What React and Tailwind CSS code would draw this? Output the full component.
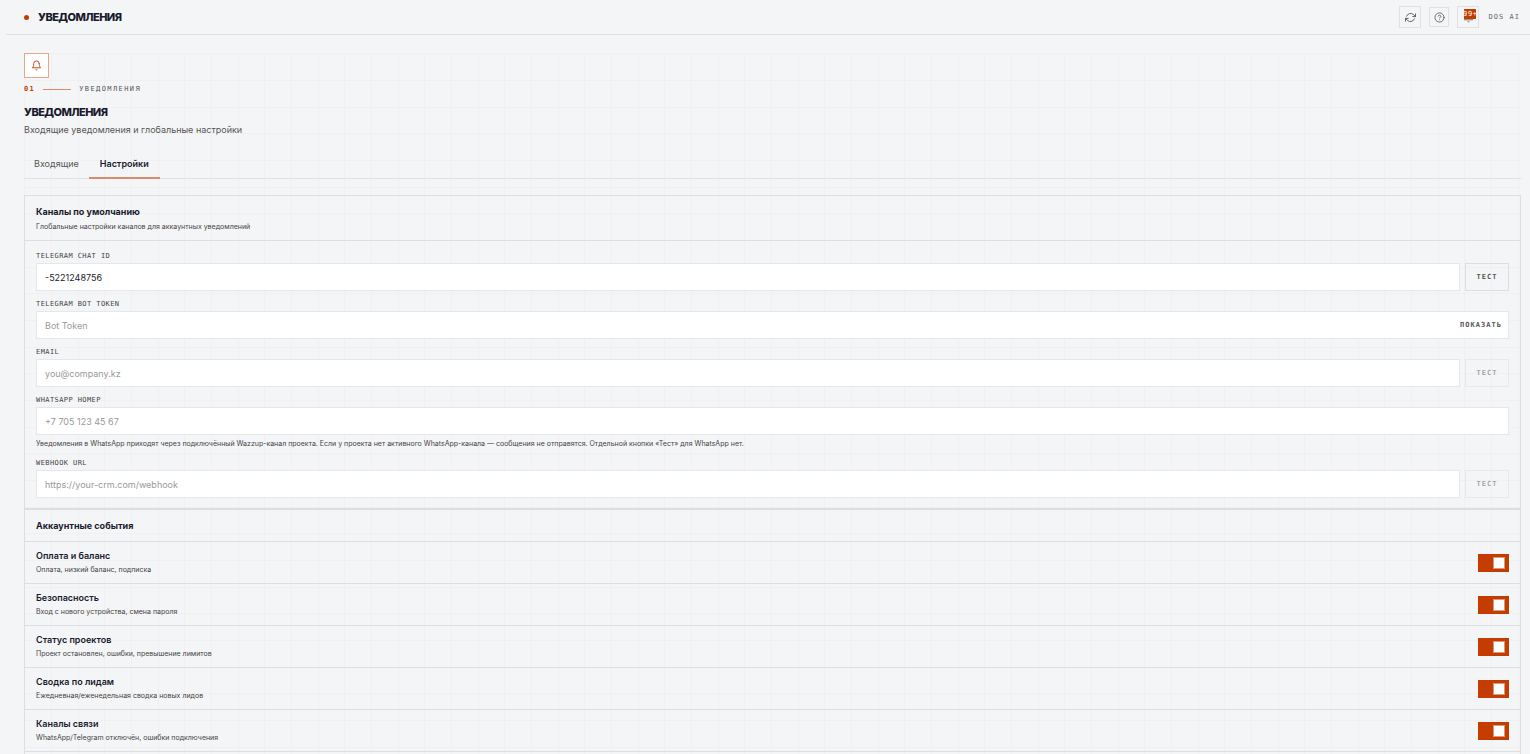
import { useState } from 'react';
import { FiBell, FiHelpCircle, FiRefreshCw } from 'react-icons/fi';

const EVENTS = [
  { id: 'billing', title: 'Оплата и баланс', note: 'Оплата, низкий баланс, подписка' },
  { id: 'security', title: 'Безопасность', note: 'Вход с нового устройства, смена пароля' },
  { id: 'projects', title: 'Статус проектов', note: 'Проект остановлен, ошибки, превышение лимитов' },
  { id: 'leads', title: 'Сводка по лидам', note: 'Ежедневная/еженедельная сводка новых лидов' },
  { id: 'channels', title: 'Каналы связи', note: 'WhatsApp/Telegram отключён, ошибки подключения' },
];

const MONO = "font-['DejaVu_Sans_Mono','Liberation_Mono',monospace]";

function Header() {
  return (
    <header className="flex h-[35px] items-center justify-between border-b border-[#dfe1e4] pr-2.5 pl-[18px]">
      <div className="flex items-center gap-[9px]">
        <span className="size-[5px] rounded-full bg-[#c43c00]" />
        <span className="text-[11px] font-extrabold tracking-tighter">УВЕДОМЛЕНИЯ</span>
      </div>
      <div className="flex items-center gap-[9px]">
        <div className="flex items-center gap-2">
          <button aria-label="Обновить" className="flex size-[22px] items-center justify-center border border-[#dfe1e4] text-[#555]">
            <FiRefreshCw size={11} />
          </button>
          <button aria-label="Справка" className="flex size-5 items-center justify-center border border-[#dfe1e4] text-[#666]">
            <FiHelpCircle size={11} />
          </button>
          <button aria-label="Уведомления" className="relative flex size-[22px] items-center justify-center border border-[#dfe1e4] text-[#666]">
            <FiBell size={11} />
            <span className={`${MONO} absolute top-[2px] right-[2px] flex h-2.5 w-3 items-center justify-center overflow-hidden bg-[#c43c00] text-[7px] tracking-widest text-white`}>
              99+
            </span>
          </button>
        </div>
        <span className={`${MONO} text-[7px] tracking-[0.15em] text-[#666]`}>DOS AI</span>
      </div>
    </header>
  );
}

function Field({ id, label, type = 'text', value, placeholder, test, reveal, hint }) {
  const [text, setText] = useState(value ?? '');
  const [shown, setShown] = useState(false);
  return (
    <div>
      <label htmlFor={id} className={`${MONO} block h-4 text-[7px] leading-[18px] tracking-[0.06em] text-[#444]`}>
        {label}
      </label>
      <div className="flex gap-[5px]">
        <div className="relative flex-1">
          <input
            id={id}
            type={reveal && !shown ? 'password' : type}
            value={text}
            onChange={(e) => setText(e.target.value)}
            placeholder={placeholder}
            className="block h-7 w-full border border-[#e5e7ea] bg-white px-2 text-[9px] text-[#1a1a2e] outline-none placeholder:text-[#999]"
          />
          {reveal && (
            <button
              onClick={() => setShown(!shown)}
              className={`${MONO} absolute inset-y-0 right-[7px] text-[7px] leading-[14px] font-bold tracking-[0.15em] text-[#555]`}
            >
              ПОКАЗАТЬ
            </button>
          )}
        </div>
        {test && (
          <button
            disabled={!text}
            className={`${MONO} h-7 w-11 border border-[#dcdee1] text-[7px] leading-[14px] font-bold tracking-[0.15em] text-[#555] disabled:opacity-50`}
          >
            ТЕСТ
          </button>
        )}
      </div>
      {hint && <p className="pt-[3px] text-[7px] leading-3 text-[#444]">{hint}</p>}
    </div>
  );
}

function EventRow({ id, title, note }) {
  const [on, setOn] = useState(true);
  return (
    <div className="flex h-[42px] items-center justify-between border-b border-[#dcdee1] px-[11px]">
      <label htmlFor={id}>
        <span className="block text-[9px] leading-[14px] font-semibold">{title}</span>
        <span className="block text-[7px] leading-[14px] text-[#444]">{note}</span>
      </label>
      <button
        id={id}
        role="switch"
        aria-checked={on}
        onClick={() => setOn(!on)}
        className="flex h-[18px] w-[31px] items-center justify-end bg-[#aaa] px-1 aria-checked:bg-[#c43c00]"
      >
        <span className="size-3 border border-[#d99878] bg-white" />
      </button>
    </div>
  );
}

export default function App() {
  return (
    <div className="flex min-h-screen flex-col bg-[#f4f5f7] pl-1.5 font-['Inter',sans-serif] text-[#1a1a2e]">
      <Header />
      <main className="mt-[18px] mr-[9px] ml-[18px] flex flex-1 flex-col bg-[linear-gradient(#f2eff0_1px,transparent_1px,transparent_27px,#f2eff0_27px,#f2eff0_28px,transparent_28px,transparent_54px,#f2eff0_54px,#f2eff0_55px,transparent_55px),linear-gradient(90deg,#f2eff0_1px,transparent_1px,transparent_27px,#f2eff0_27px,#f2eff0_28px,transparent_28px,transparent_54px,#f2eff0_54px,#f2eff0_55px,transparent_55px)] bg-size-[80px_80px]">
        <div className="flex size-[25px] items-center justify-center border border-[#e5a78c] bg-white text-[#c43c00]">
          <FiBell size={11} />
        </div>
        <div className={`${MONO} mt-1 flex h-3.5 items-center text-[7px] tracking-[0.2em] text-[#555]`}>
          <span className="font-bold text-[#c43c00]">01</span>
          <span className="mx-2 h-px w-7 bg-[#dd8a66]" />
          <span>УВЕДОМЛЕНИЯ</span>
        </div>
        <h1 className="mt-2 text-[11px] leading-4 font-extrabold tracking-tighter">УВЕДОМЛЕНИЯ</h1>
        <p className="mt-[3px] text-[9px] leading-3.5 text-[#555]">Входящие уведомления и глобальные настройки</p>

        <div role="tablist" className="mt-[13px] flex h-[29px] border-b border-[#dfe1e4] text-[9px]">
          <button role="tab" aria-selected="false" className="px-2.5 text-[#555]">Входящие</button>
          <button role="tab" aria-selected="true" className="-mb-px border-b-2 border-[#d98c6c] px-[11px] font-semibold">Настройки</button>
        </div>

        <section className="mt-4 flex-1 border border-b-0 border-[#dcdee1]">
          <div className="flex h-[45px] flex-col justify-center border-b border-[#dcdee1] px-[11px]">
            <h2 className="text-[9px] leading-4 font-bold">Каналы по умолчанию</h2>
            <p className="text-[7px] leading-[13px] text-[#444]">Глобальные настройки каналов для аккаунтных уведомлений</p>
          </div>
          <div className="flex flex-col gap-1 border-b-2 border-[#dcdee1] px-[11px] pt-1.5 pb-2.5">
            <Field id="tg-chat" label="TELEGRAM CHAT ID" value="-5221248756" test />
            <Field id="tg-token" label="TELEGRAM BOT TOKEN" placeholder="Bot Token" reveal />
            <Field id="email" label="EMAIL" type="email" placeholder="you@company.kz" test />
            <Field
              id="wa"
              label="WHATSAPP НОМЕР"
              type="tel"
              placeholder="+7 705 123 45 67"
              hint="Уведомления в WhatsApp приходят через подключённый Wazzup-канал проекта. Если у проекта нет активного WhatsApp-канала — сообщения не отправятся. Отдельной кнопки «Тест» для WhatsApp нет."
            />
            <Field id="webhook" label="WEBHOOK URL" type="url" placeholder="https://your-crm.com/webhook" test />
          </div>
          <h2 className="flex h-8 items-center border-b border-[#dcdee1] px-[11px] text-[9px] font-bold">Аккаунтные события</h2>
          {EVENTS.map((event) => (
            <EventRow key={event.id} {...event} />
          ))}
        </section>
      </main>
    </div>
  );
}
